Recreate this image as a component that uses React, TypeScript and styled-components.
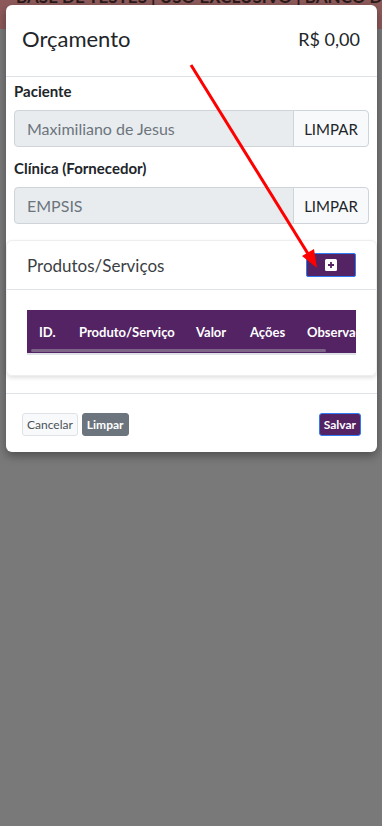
import React from "react";
import styled, { createGlobalStyle } from "styled-components";

const palette = {
  purple: "#532364",
  focus: "#2f7bf5",
  border: "#ced4da",
  inputBg: "#e9ecef",
  light: "#f8f9fa",
  text: "#212529",
  muted: "#6c757d",
  line: "#dee2e6",
};

const GlobalStyle = createGlobalStyle`
  * { box-sizing: border-box; }
  body {
    margin: 0;
    font-family: Lato, "Open Sans", sans-serif;
    color: ${palette.text};
  }
`;

const Page = styled.div`
  position: relative;
  width: 382px;
  height: 826px;
  overflow: hidden;
  background: #797979;
`;

const TopStrip = styled.div`
  height: 40px;
  background: #8d5a5a;
  color: #2a1a1a;
  font-weight: 700;
  font-size: 17px;
  line-height: 16px;
  white-space: nowrap;
  padding-left: 16px;
  span {
    display: block;
    margin-top: -11px;
  }
`;

const Dialog = styled.div`
  position: absolute;
  top: 5px;
  left: 6px;
  width: 371px;
  background: #fff;
  border-radius: 6px;
  box-shadow: 0 4px 10px rgba(0, 0, 0, 0.35);
  display: flex;
  flex-direction: column;
`;

const Header = styled.header`
  height: 72px;
  padding: 0 17px 4px 16px;
  display: flex;
  justify-content: space-between;
  align-items: center;
  border-bottom: 1px solid ${palette.line};
  h1 {
    margin: 0;
    font-size: 22px;
    font-weight: 400;
  }
  span {
    font-size: 18px;
  }
`;

const Body = styled.div`
  padding: 4px 8px 0;
  display: flex;
  flex-direction: column;
`;

const Label = styled.label`
  font-size: 15px;
  font-weight: 700;
  margin: 0 0 9px;
  line-height: 20px;
`;

const InputGroup = styled.div`
  display: flex;
  height: 37px;
  margin-bottom: 11px;
`;

const Input = styled.div`
  flex: 1;
  background: ${palette.inputBg};
  border: 1px solid ${palette.border};
  border-radius: 4px 0 0 4px;
  color: ${palette.muted};
  font-size: 16px;
  padding: 0 12px;
  display: flex;
  align-items: center;
`;

const GroupButton = styled.button`
  width: 76px;
  margin-left: -1px;
  background: ${palette.light};
  border: 1px solid ${palette.border};
  border-radius: 0 4px 4px 0;
  color: ${palette.text};
  font-family: inherit;
  font-size: 15px;
`;

const Card = styled.section`
  margin: 5px -8px 0;
  border: 1px solid #eceef0;
  border-radius: 6px;
  box-shadow: 0 2px 4px rgba(0, 0, 0, 0.12);
`;

const CardHeader = styled.div`
  height: 49px;
  padding: 0 20px;
  display: flex;
  align-items: center;
  justify-content: space-between;
  border-bottom: 1px solid ${palette.line};
  font-size: 17px;
  color: #3b3f44;
`;

const AddButton = styled.button`
  width: 50px;
  height: 24px;
  background: ${palette.purple};
  border: 1px solid ${palette.focus};
  border-radius: 2px;
  display: flex;
  align-items: center;
  justify-content: center;
  padding: 0;
`;

const CardBody = styled.div`
  padding: 20px 20px 20px;
`;

const TableWrap = styled.div`
  position: relative;
  background: ${palette.purple};
  height: 45px;
  overflow: hidden;
  border-bottom: 2px solid ${palette.line};
`;

const HeadRow = styled.div`
  display: flex;
  align-items: center;
  height: 43px;
  white-space: nowrap;
  color: #fff;
  font-weight: 700;
  font-size: 13px;
`;

const Th = styled.div<{ $w: number }>`
  flex: 0 0 ${(p) => p.$w}px;
  padding-left: 12px;
`;

/* overlay scrollbar thumb drawn over the table head */
const ScrollThumb = styled.div`
  position: absolute;
  left: 4px;
  bottom: 1px;
  width: 295px;
  height: 3px;
  border-radius: 2px;
  background: #7e6588;
`;

const Footer = styled.footer`
  margin-top: 17px;
  border-top: 1px solid ${palette.line};
  padding: 19px 16px 16px;
  display: flex;
  align-items: center;
  gap: 4px;
`;

const SmallButton = styled.button<{ $variant: "light" | "secondary" | "primary" }>`
  height: 23px;
  padding: 0 4px;
  font-family: inherit;
  font-size: 12px;
  border-radius: 3px;
  border: 1px solid
    ${(p) =>
      p.$variant === "light" ? palette.line : p.$variant === "primary" ? palette.focus : palette.muted};
  background: ${(p) =>
    p.$variant === "light" ? palette.light : p.$variant === "primary" ? palette.purple : palette.muted};
  color: ${(p) => (p.$variant === "light" ? "#4b5157" : "#fff")};
  font-weight: ${(p) => (p.$variant === "light" ? 400 : 700)};
  margin-left: ${(p) => (p.$variant === "primary" ? "auto" : "0")};
`;

const Arrow = styled.svg`
  position: absolute;
  top: 0;
  left: 0;
  pointer-events: none;
`;

const PlusSquare = () => (
  <svg width="12" height="12" viewBox="0 0 12 12">
    <rect x="0" y="0" width="12" height="12" rx="1.5" fill="#fff" />
    <path d="M6 3v6M3 6h6" stroke={palette.purple} strokeWidth="1.8" />
  </svg>
);

const columns: [string, number][] = [
  ["ID.", 40],
  ["Produto/Serviço", 117],
  ["Valor", 54],
  ["Ações", 57],
  ["Observações", 100],
];

const App = () => {
  return (
    <Page>
      <GlobalStyle />
      <TopStrip>
        <span>BASE DE TESTES | USO EXCLUSIVO | BANCO DE</span>
      </TopStrip>
      <Dialog>
        <Header>
          <h1>Orçamento</h1>
          <span>R$ 0,00</span>
        </Header>
        <Body>
          <Label>Paciente</Label>
          <InputGroup>
            <Input>Maximiliano de Jesus</Input>
            <GroupButton>LIMPAR</GroupButton>
          </InputGroup>
          <Label>Clínica (Fornecedor)</Label>
          <InputGroup>
            <Input>EMPSIS</Input>
            <GroupButton>LIMPAR</GroupButton>
          </InputGroup>
          <Card>
            <CardHeader>
              Produtos/Serviços
              <AddButton>
                <PlusSquare />
              </AddButton>
            </CardHeader>
            <CardBody>
              <TableWrap>
                <HeadRow>
                  {columns.map(([name, w]) => (
                    <Th key={name} $w={w}>
                      {name}
                    </Th>
                  ))}
                </HeadRow>
                <ScrollThumb />
              </TableWrap>
            </CardBody>
          </Card>
        </Body>
        <Footer>
          <SmallButton $variant="light">Cancelar</SmallButton>
          <SmallButton $variant="secondary">Limpar</SmallButton>
          <SmallButton $variant="primary">Salvar</SmallButton>
        </Footer>
      </Dialog>
      <Arrow width="382" height="826">
        <line x1="191" y1="65" x2="310" y2="257" stroke="#f00" strokeWidth="3" />
        <polygon points="317,268 302,256 314,249" fill="#f00" />
      </Arrow>
    </Page>
  );
};

export default App;
